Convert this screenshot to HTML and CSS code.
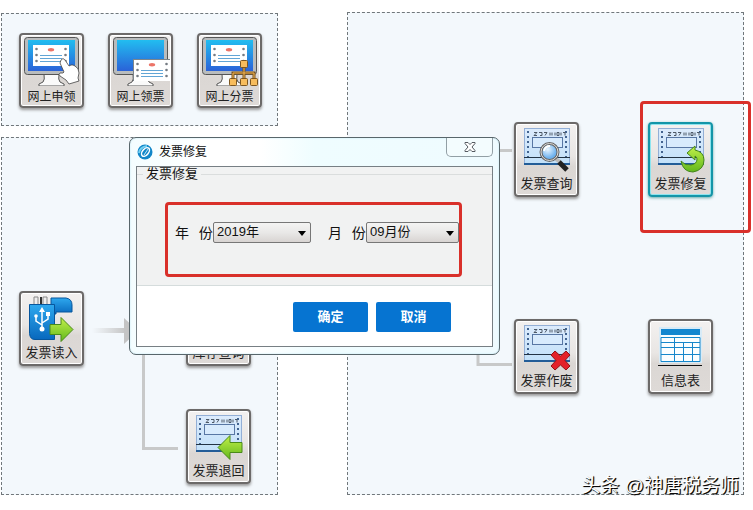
FILE: index.html
```html
<!DOCTYPE html>
<html lang="zh-CN">
<head>
<meta charset="utf-8">
<title>发票修复</title>
<link rel="stylesheet" href="styles.css">
</head>
<body>
<svg class="defs" aria-hidden="true">
  <defs>
    <linearGradient id="screen" x1="0" y1="0" x2="0" y2="1"><stop offset="0" stop-color="#22bdf0"/><stop offset="1" stop-color="#2a62d8"/></linearGradient>
    <linearGradient id="paper" x1="0" y1="0" x2="0" y2="1"><stop offset="0" stop-color="#dcebfc"/><stop offset="1" stop-color="#c3e1f9"/></linearGradient>
    <linearGradient id="green" x1="0" y1="0" x2="0" y2="1"><stop offset="0" stop-color="#c2f04a"/><stop offset="1" stop-color="#62b81c"/></linearGradient>
    <linearGradient id="blue" x1="0" y1="0" x2="0" y2="1"><stop offset="0" stop-color="#2ea8ee"/><stop offset="1" stop-color="#0868bd"/></linearGradient>
    <linearGradient id="fade"><stop offset="0" stop-color="#c9c9c9" stop-opacity="0"/><stop offset="1" stop-color="#c4c4c4"/></linearGradient>
    <radialGradient id="lens" cx=".4" cy=".35"><stop offset="0" stop-color="#eaf6ff"/><stop offset="1" stop-color="#6fb2ee"/></radialGradient>
    <symbol id="monitor" viewBox="0 0 59 50">
      <path d="M22 38h15q-1 6 1 8l4 2q1 2-1 2H18q-2 0-1-2l4-2q2-2 1-8z" fill="#fafafa" stroke="#555"/>
      <rect x="2.500" y="1.500" width="54" height="37" rx="3" fill="#b9bcbd" stroke="#555"/>
      <rect x="6" y="4" width="47" height="31" fill="url(#screen)"/>
    </symbol>
    <symbol id="slip" viewBox="0 0 36 21">
      <rect width="36" height="21" fill="#fff"/>
      <g fill="#757b83"><circle cx="3.500" cy="4" r="1.300"/><circle cx="3.500" cy="10" r="1.300"/><circle cx="3.500" cy="16" r="1.300"/><circle cx="32.500" cy="4" r="1.300"/><circle cx="32.500" cy="10" r="1.300"/><circle cx="32.500" cy="16" r="1.300"/></g>
      <ellipse cx="18" cy="4.800" rx="3.200" ry="1.700" fill="#ec7468"/>
      <path d="M7 10.500h22M7 13.500h22M7 16.500h22" stroke="#62a5d5"/>
    </symbol>
    <symbol id="invoice" viewBox="0 0 59 50">
      <rect x="7.500" y="3.500" width="45" height="35" fill="url(#paper)" stroke="#93afd6"/>
      <path d="M11 6v26M49 6v26" stroke="#42638f" stroke-width="2" stroke-dasharray="2 3"/>
      <path d="M17 7.500h3l-3 3h3m2-3h3v3h-2m4-3h3l-2 3m5-3v3m2-3v3m3-3v3m2-3h2v3h-2zm4 0v3m2-3h2v3" fill="none" stroke="#4d5967"/>
      <rect x="15.500" y="12.500" width="30" height="10" fill="#d8ebfd" stroke="#5877a4"/>
      <path d="M7 32.500h46" stroke="#234"/><path d="M7 39h46" stroke="#235d98" stroke-width="2"/>
    </symbol>
  </defs>
</svg>

<main class="board">
  <div class="side">
    <section class="panel apply">
      <button class="tile small" type="button">
        <svg class="icon" viewBox="0 0 59 50" aria-hidden="true"><use href="#monitor" width="59" height="50"/><use href="#slip" x="11" y="9" width="36" height="21"/>
          <path d="M39 24q2-3 4 0l4 6 2-1 2 0 2 1q4 2 4 7l-1 5 1 3-10 3-3-4-6-4q-2-2 0-3l3 0 1-1-4-9z" fill="#fff" stroke="#444" stroke-width=".8"/></svg>
        <span>网上申领</span></button>
      <button class="tile small" type="button">
        <svg class="icon" viewBox="0 0 59 50" aria-hidden="true"><use href="#monitor" width="59" height="50"/><rect x="22" y="23" width="37" height="22" fill="#7d858b"/><use href="#slip" x="23" y="24" width="36" height="21"/></svg>
        <span>网上领票</span></button>
      <button class="tile small" type="button">
        <svg class="icon" viewBox="0 0 59 50" aria-hidden="true"><use href="#monitor" width="59" height="50"/><use href="#slip" x="11" y="9" width="36" height="21"/>
          <path d="M44 32v10M33 42v-5h21v5" fill="none" stroke="#7b5520" stroke-width="3"/><path d="M44 32v10M33 42v-5h21v5" fill="none" stroke="#f4b653"/>
          <g fill="#f7bc5c" stroke="#7b5520"><rect x="40.500" y="24.500" width="7" height="7" rx="1"/><rect x="29.500" y="42.500" width="7" height="7" rx="1"/><rect x="40.500" y="42.500" width="7" height="7" rx="1"/><rect x="50.500" y="42.500" width="7" height="7" rx="1"/></g></svg>
        <span>网上分票</span></button>
    </section>

    <section class="panel stock">
      <svg class="links" width="275" height="357" viewBox="0 0 275 357" aria-hidden="true">
        <path d="M90 190h34v5H90z" fill="url(#fade)"/><path d="M122 180l14 13-14 13z" fill="#c4c4c4"/>
        <path d="M141.500 193v117.500H176" fill="none" stroke="#c8c9c9" stroke-width="3"/></svg>
      <button class="tile" type="button">
        <svg class="icon" viewBox="0 0 59 50" aria-hidden="true">
          <path d="M12 3h4v8h-4zM21 3h4v8h-4z" fill="#eee" stroke="#888"/><path d="M18 3h2v8h-2z" fill="#333"/>
          <path d="M29 4h15q6 1 6 7v7H34v2h-5z" fill="url(#blue)" stroke="#07569d"/>
          <path d="M7.500 10.500h25v35H13q-5 0-5.500-6z" fill="url(#blue)" stroke="#07569d"/>
          <g fill="none" stroke="#fff" stroke-width="1.500"><path d="M20 17v18M20 31l-6-4v-5M20 29l6-4v-4"/></g>
          <path d="M20 13l3 5h-6z" fill="#fff"/><circle cx="20" cy="35" r="2.500" fill="#fff"/><circle cx="14" cy="22" r="1.800" fill="#fff"/><path d="M24 18h4v4h-4z" fill="#fff"/>
          <path d="M28 30.500h11v-7l12 12-12 12v-7H28z" fill="url(#green)" stroke="#4a8a1a"/></svg>
        <span>发票读入</span></button>
      <button class="tile" type="button">
        <svg class="icon" viewBox="0 0 59 50" aria-hidden="true"><use href="#invoice" width="59" height="50"/></svg>
        <span>库存查询</span></button>
      <button class="tile second" type="button">
        <svg class="icon" viewBox="0 0 59 50" aria-hidden="true"><use href="#invoice" width="59" height="50"/><path d="M53 30.500H41v-7l-12 12 12 12v-7h12z" fill="url(#green)" stroke="#4a8a1a"/></svg>
        <span>发票退回</span></button>
    </section>
  </div>

  <section class="panel manage">
    <svg class="links" width="200" height="380" viewBox="0 0 200 380" aria-hidden="true"><path d="M130 137.500h34M130 320v31.500h34" fill="none" stroke="#c8c9c9" stroke-width="3"/></svg>
    <button class="tile" type="button">
      <svg class="icon" viewBox="0 0 59 50" aria-hidden="true"><use href="#invoice" width="59" height="50"/>
        <path d="M39 34l4 3" stroke="#bbb" stroke-width="4"/><path d="M42 37l8 8" stroke="#222" stroke-width="5"/><circle cx="32.500" cy="27" r="8.500" fill="url(#lens)" stroke="#666" stroke-width="3"/><circle cx="32.500" cy="27" r="8.500" fill="none" stroke="#ddd"/><path d="M27 26q1-5 6-5" fill="none" stroke="#fff" stroke-width="2"/></svg>
      <span>发票查询</span></button>
    <button class="tile active" type="button">
      <svg class="icon" viewBox="0 0 59 50" aria-hidden="true"><use href="#invoice" width="59" height="50"/>
        <path d="M30 36q4 5 10 4 6-1 6-6 0-2-2-3v4l-8-7 8-7v4q9 2 9 10 0 10-11 12-10 0-12-11z" fill="url(#green)" stroke="#43851b"/></svg>
      <span>发票修复</span></button>
    <button class="tile" type="button">
      <svg class="icon" viewBox="0 0 59 50" aria-hidden="true"><use href="#invoice" width="59" height="50"/>
        <path d="M38 29l5.500 5 5.500-5 4 4-5 5.500 5 5.500-4 4-5.500-5-5.500 5-4-4 5-5.500-5-5.500z" fill="#e3212a" stroke="#941218"/></svg>
      <span>发票作废</span></button>
    <button class="tile" type="button">
      <svg class="icon" viewBox="0 0 59 50" aria-hidden="true"><rect x="8" y="5" width="43" height="36" fill="#d8ebf7"/><rect x="10" y="7" width="39" height="33" fill="#fafeff"/><rect x="10" y="7" width="39" height="6" fill="#1487cf"/>
        <path d="M10 15.500h39v24H10zM10 20.500h39M10 25.500h39M10 32.500h39M23.500 16v24M32.500 20v20M41.500 20v20" fill="none" stroke="#1687cb"/><path d="M7 43.500h44" stroke="#111"/></svg>
      <span>信息表</span></button>
    <div class="mark mark-tile"></div>
  </section>
</main>

<form class="dialog" role="dialog" aria-labelledby="dialog-title">
  <header class="titlebar">
    <svg class="logo" viewBox="0 0 16 16" aria-hidden="true"><circle cx="8" cy="8" r="7.500" fill="#1286c8"/><path d="M2 9q1-6 8-7" fill="none" stroke="#72d0f2" stroke-width="2"/><ellipse cx="8.500" cy="8" rx="5" ry="3" transform="rotate(-50 8.500 8)" fill="#1286c8" stroke="#fff" stroke-width="1.500"/><path d="M7 11l4-6" stroke="#bce7fa"/></svg>
    <h1 id="dialog-title">发票修复</h1>
    <button class="close" type="button" aria-label="关闭"><svg viewBox="0 0 12 10" width="12" height="10" aria-hidden="true"><path d="M1 .5h3l2 2 2-2h3v1L8 5l3 3.500v1H8l-2-2-2 2H1v-1L4 5 1 1.500z" fill="#fff" stroke="#545a60"/></svg></button>
  </header>
  <div class="client">
    <fieldset class="group">
      <legend>发票修复</legend>
      <div class="fields">
        <label for="year">年&ensp;&thinsp;份</label>
        <span class="select"><select id="year"><option>2019年</option></select></span>
        <label class="next" for="month">月&ensp;&thinsp;份</label>
        <span class="select"><select id="month"><option>09月份</option></select></span>
      </div>
    </fieldset>
    <footer class="actions"><button type="submit">确定</button><button type="button">取消</button></footer>
  </div>
  <div class="mark mark-fields"></div>
</form>
<p class="credit">头条 @神唐税务师</p>
</body>
</html>
```
FILE: styles.css
```css
* { box-sizing: border-box; }

body {
  position: relative;
  margin: 0;
  background: #fff;
  color: #222;
  font: 13px/18px "Liberation Sans", "Noto Sans CJK SC", sans-serif;
}

button, select { font: inherit; color: inherit; }

.defs { position: absolute; width: 0; height: 0; }

.board {
  display: grid;
  grid-template-columns: 277fr 397fr;
  gap: 69px;
  padding: 12px 9px 15px 1px;
}

.side {
  display: flex;
  flex-direction: column;
  gap: 11px;
  padding-top: 1px;
}

.panel {
  position: relative;
  border: 1px dashed #70777b;
  background: #f3f8fc;
}

.apply {
  display: flex;
  gap: 24px;
  padding: 19px 15px 17px 17px;
}

.stock {
  display: grid;
  grid-template-columns: 65px 65px;
  gap: 43px 102px;
  align-content: start;
  flex: 1;
  padding: 153px 15px 10px 17px;
}

.stock .second { grid-column: 2; }

.manage {
  display: grid;
  grid-template-columns: 65px 65px;
  gap: 122px 69px;
  align-content: start;
  padding: 109px 29px 100px 166px;
}

.links {
  position: absolute;
  top: 0;
  left: 0;
}

.tile {
  position: relative;
  display: flex;
  flex-direction: column;
  align-items: center;
  width: 65px;
  height: 75px;
  padding: 1px;
  border: 2px solid #6c6a69;
  border-radius: 4px;
  background: linear-gradient(#f3f1f0, #e9e6e4 45%, #dbd7d4 60%, #dedad7);
  box-shadow: inset 0 0 0 1px #fff, 0 2px 3px #999;
  white-space: nowrap;
}

.tile.active {
  border-color: #1395a8;
  box-shadow: inset 0 0 0 1px #8de4ef, 0 1px 3px #6aa;
}

.small { font-size: 12px; }
.small span { padding-top: 2px; }

.icon {
  display: block;
  flex: none;
  width: 59px;
  height: 50px;
}

.dialog {
  position: absolute;
  top: 137px;
  left: 129px;
  width: 371px;
  padding: 0 6px 7px;
  border: 1px solid #58666b;
  border-radius: 7px;
  background: linear-gradient(90deg, #f4fdff, #fff 20%, #fff 35%, #effdff 50%, #effbff);
  box-shadow: inset 0 0 2px #bde6f2;
}

.titlebar {
  display: flex;
  align-items: center;
  gap: 6px;
  height: 28px;
}

.logo { width: 16px; height: 16px; margin-left: 1px; }

h1 { margin: 0; font-size: 12px; font-weight: 400; color: #111; }

.close {
  display: flex;
  align-items: center;
  justify-content: center;
  align-self: flex-start;
  width: 47px;
  height: 19px;
  margin-left: auto;
  padding: 0;
  border: 1px solid #929fa5;
  border-top: 0;
  border-radius: 0 0 5px 5px;
  background: #f3fcfe;
}

.client {
  border: 1px solid #777f84;
  background: #fff;
}

.group {
  margin: 0;
  padding: 0 0 41px;
  border: 0;
  border-bottom: 1px solid #d5dcdc;
  background: linear-gradient(#dadddd, #dadddd) 0 7px / 100% 1px no-repeat, #f1f2f2;
}

.group legend {
  float: left;
  width: auto;
  margin-left: 6px;
  padding: 0 3px;
  background: #f1f2f2;
  line-height: 14px;
  color: #111;
}

.fields {
  clear: both;
  display: flex;
  align-items: center;
  padding: 39px 0 0 38px;
  color: #111;
}

.fields label { width: 38px; white-space: nowrap; font-size: 14px; line-height: 21px; padding-top: 3px; }
.fields .next { margin-left: 17px; }

.select { position: relative; width: 98px; }

.select::after {
  content: "";
  position: absolute;
  top: 9px;
  right: 5px;
  border: 4px solid transparent;
  border-top: 5px solid #000;
  border-bottom: 0;
  pointer-events: none;
}

.fields .select:last-child { width: 93px; }

select {
  display: block;
  width: 100%;
  height: 21px;
  padding: 0 0 1px 3px;
  appearance: none;
  border: 1px solid #777;
  border-radius: 2px;
  background: linear-gradient(#f4f4f3, #e9e8e7 50%, #d8d4d2);
}

.actions {
  display: flex;
  justify-content: flex-end;
  gap: 8px;
  padding: 16px 41px 14px;
}

.actions button {
  width: 75px;
  height: 30px;
  padding: 0;
  border: 0;
  border-radius: 2px;
  background: #0674d1;
  color: #fff;
  font-weight: 700;
}

.mark {
  position: absolute;
  border: 3px solid #d9302a;
  border-radius: 4px;
  pointer-events: none;
}

.mark-fields { top: 64px; left: 35px; width: 297px; height: 75px; }
.mark-tile { top: 88px; right: -8px; width: 111px; height: 132px; }

.credit {
  position: absolute;
  right: 14px;
  bottom: 12px;
  margin: 0;
  color: #fff;
  font-size: 19px;
  line-height: 24px;
  text-shadow: 1px 1px 1px #000, 1px 1px 0 #333;
}
```
